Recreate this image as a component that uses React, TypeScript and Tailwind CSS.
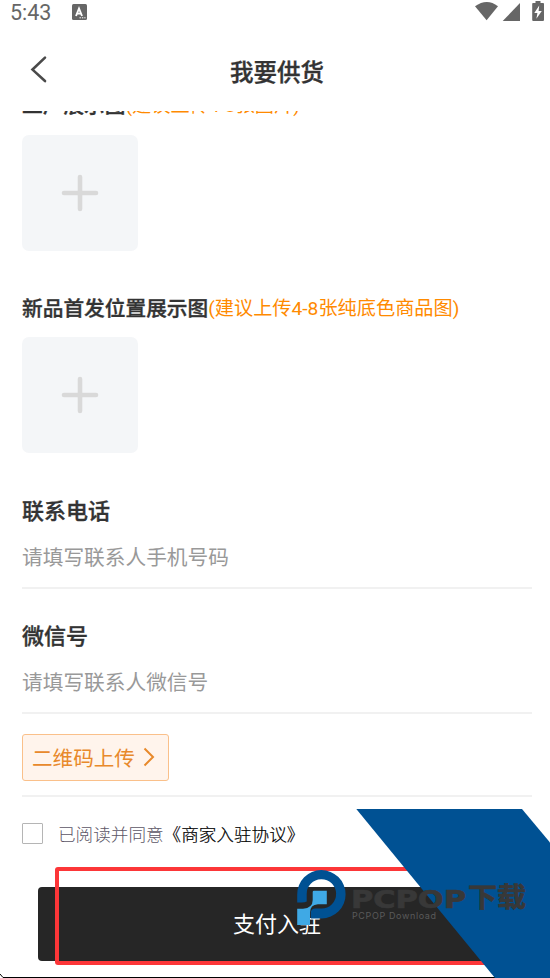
import React from "react";

interface IUploadSectionProps {
  title: string;
  hint: string;
}

const UploadSection = (props: IUploadSectionProps) => {
  return (
    <section className="flex flex-col gap-[15.5px]">
      <h2 className="flex h-[30px] items-center whitespace-nowrap text-[20.7px] font-medium leading-[30px] text-[#333] [-webkit-text-stroke:0.35px_#333]">
        {props.title}
        <span className="pt-[4px] font-[Roboto,'Noto_Sans_CJK_SC',sans-serif] text-[19.2px] font-normal text-[#ff8a00] [-webkit-text-stroke:0]">
          {props.hint}
        </span>
      </h2>
      <button className="flex h-[116px] w-[116px] items-center justify-center rounded-[7px] bg-[#f4f6f8]">
        <svg width="38" height="38" viewBox="0 0 38 38">
          <path
            d="M19 3v32M3 19h32"
            stroke="#d9d9d9"
            strokeWidth="4.6"
            strokeLinecap="round"
          />
        </svg>
      </button>
    </section>
  );
};

interface IFieldProps {
  label: string;
  placeholder: string;
}

const Field = (props: IFieldProps) => {
  return (
    <div className="flex h-[95px] flex-col border-b-2 border-[#f1f1f1]">
      <label className="h-[30px] text-[22px] font-medium leading-[30px] text-[#333] [-webkit-text-stroke:0.35px_#333]">
        {props.label}
      </label>
      <div className="mt-[17px] h-[30px] text-[20.7px] leading-[30px] text-[#999]">
        {props.placeholder}
      </div>
    </div>
  );
};

const StatusBar = () => {
  return (
    <div className="flex h-6 items-center justify-between pl-[10px] pr-[5px] text-[#666]">
      <div className="flex items-center gap-[21px]">
        <span className="pt-px font-[Roboto] text-[21.5px] leading-6">
          5:43
        </span>
        <svg width="15" height="16" viewBox="0 0 15 16">
          <rect width="15" height="16" rx="1.5" fill="#666" />
          <path
            d="M4 12L7 4.5L10 12M5 9.6h4"
            fill="none"
            stroke="#fff"
            strokeWidth="1.9"
          />
          <path d="M7.5 13.8h6" stroke="#fff" strokeDasharray="1.4 1" />
        </svg>
      </div>
      <svg width="70" height="24" viewBox="0 0 70 24" fill="#666">
        <path d="M0 6.2Q12 -2.3 23 6.2L11.6 20.3z" />
        <path d="M45 3v18H27.7z" />
        <path d="M60.5 1h5v2h2.7q.8 0 .8 .9v16q0 1.1-1.1 1.1h-9.6q-1.1 0-1.1-1.1v-16q0-.9 .8-.9h2.5z" />
        <path d="M64.2 5.5L59.3 13h3.1l-1 5.7L66.8 11h-3.2z" fill="#fff" />
      </svg>
    </div>
  );
};

const Watermark = () => {
  return (
    <svg
      className="pointer-events-none absolute bottom-0 right-0"
      width="270"
      height="188"
      viewBox="280 790 270 188"
    >
      <path d="M356.3 809H522L550 842.5V978H495z" fill="#005193" />
      <path
        d="M297.2 902.6V894.5A24.2 24.2 0 1 1 321.5 918.5H310.8V912Q311.5 909 315 908.6H321.5A14.7 14.7 0 1 0 306.7 894.3V901.5Q304.5 902.6 302 902.6z"
        fill="#005193"
      />
      <path
        d="M314 890.7H326.8V904.2H318Q310 904.8 310 912.5V925H297.2V908.8H303Q312.7 908 312.7 900V892Q312.7 890.7 314 890.7z"
        fill="#3fa9e5"
      />
      <g fill="#383838" stroke="#383838" strokeWidth="0.7">
        <text
          x="351"
          y="907.7"
          fontSize="25.5"
          fontWeight="700"
          fontFamily="DejaVu Sans"
          textLength="115"
          lengthAdjust="spacingAndGlyphs"
        >
          PCPOP
        </text>
        <text
          x="468"
          y="907"
          fontSize="27"
          fontWeight="700"
          fontFamily="Noto Sans CJK SC"
          textLength="58"
          lengthAdjust="spacingAndGlyphs"
        >
          下载
        </text>
      </g>
      <text
        x="352"
        y="919"
        fontSize="9"
        fill="#5a5a5a"
        fontFamily="Inter"
        textLength="84"
        lengthAdjust="spacing"
      >
        PCPOP Download
      </text>
    </svg>
  );
};

export default function App() {
  return (
    <div className="relative flex h-[978px] w-[550px] flex-col overflow-hidden bg-white font-['Noto_Sans_CJK_SC',sans-serif]">
      <StatusBar />
      <header className="grid h-[87px] shrink-0 grid-cols-[100px_1fr_96px] pt-[30px]">
        <svg
          className="ml-[30px] mt-px"
          width="18"height="28"
          viewBox="0 0 18 28"
        >
          <path
            d="M15 2.6L2.5 14.6L15 26"
            fill="none"
            stroke="#4a4a4a"
            strokeWidth="2.6"
            strokeLinecap="round"
          />
        </svg>
        <h1 className="text-center text-[23.5px] font-medium leading-[34px] text-[#333] [-webkit-text-stroke:0.35px_#333]">
          我要供货
        </h1>
      </header>

      <main className="flex-1 overflow-hidden pl-[22px] pr-[18px]">
        <div className="-mt-[22px] flex flex-col gap-[41px]">
          <UploadSection title="工厂展示图" hint="(建议上传4-8张图片)" />
          <UploadSection
            title="新品首发位置展示图"
            hint="(建议上传4-8张纯底色商品图)"
          />
        </div>
        <div className="mt-[41px] flex flex-col gap-[29.5px]">
          <Field label="联系电话" placeholder="请填写联系人手机号码" />
          <Field label="微信号" placeholder="请填写联系人微信号" />
        </div>
        <div className="border-b-2 border-[#f1f1f1] pb-[14px] pt-[20px]">
          <button className="flex h-[47px] w-[147px] items-center gap-[8px] rounded-[3px] border border-[#fac08a] bg-[#fff4ec] pl-[9px] text-[20.6px] text-[#e8892b]">
            二维码上传
            <svg width="12" height="20" viewBox="0 0 12 20">
              <path
                d="M1.5 1.5L10 10L1.5 18.5"
                fill="none"
                stroke="#e8892b"
                strokeWidth="2"
              />
            </svg>
          </button>
        </div>
        <div className="mt-[26px] flex h-[21px] items-center gap-[15px] whitespace-nowrap text-[17.6px] font-light leading-[21px]">
          <span className="h-[21px] w-[21px] rounded-[1px] border border-[#b5b5b5]" />
          <p className="text-[#5c5666]">
            已阅读并同意
            <span className="text-black [-webkit-text-stroke:0.2px_#000]">
              《商家入驻协议》
            </span>
          </p>
        </div>
        <button className="ml-4 mt-[43px] flex h-[74px] w-[474px] items-center justify-center rounded-[4px] bg-[#262626] pb-[2px] pl-1 text-[22px] text-white">
          支付入驻
        </button>
      </main>

      <div className="absolute left-[55px] top-[867px] h-[98px] w-[444px] rounded-[3px] border-4 border-[#fc3638]" />
      <svg
        className="absolute bottom-0 left-0"
        width="550"
        height="4"
        viewBox="0 0 550 4"
      >
        <path d="M0 0L3 3.5H550" fill="none" stroke="#000" />
      </svg>
      <Watermark />
    </div>
  );
}
